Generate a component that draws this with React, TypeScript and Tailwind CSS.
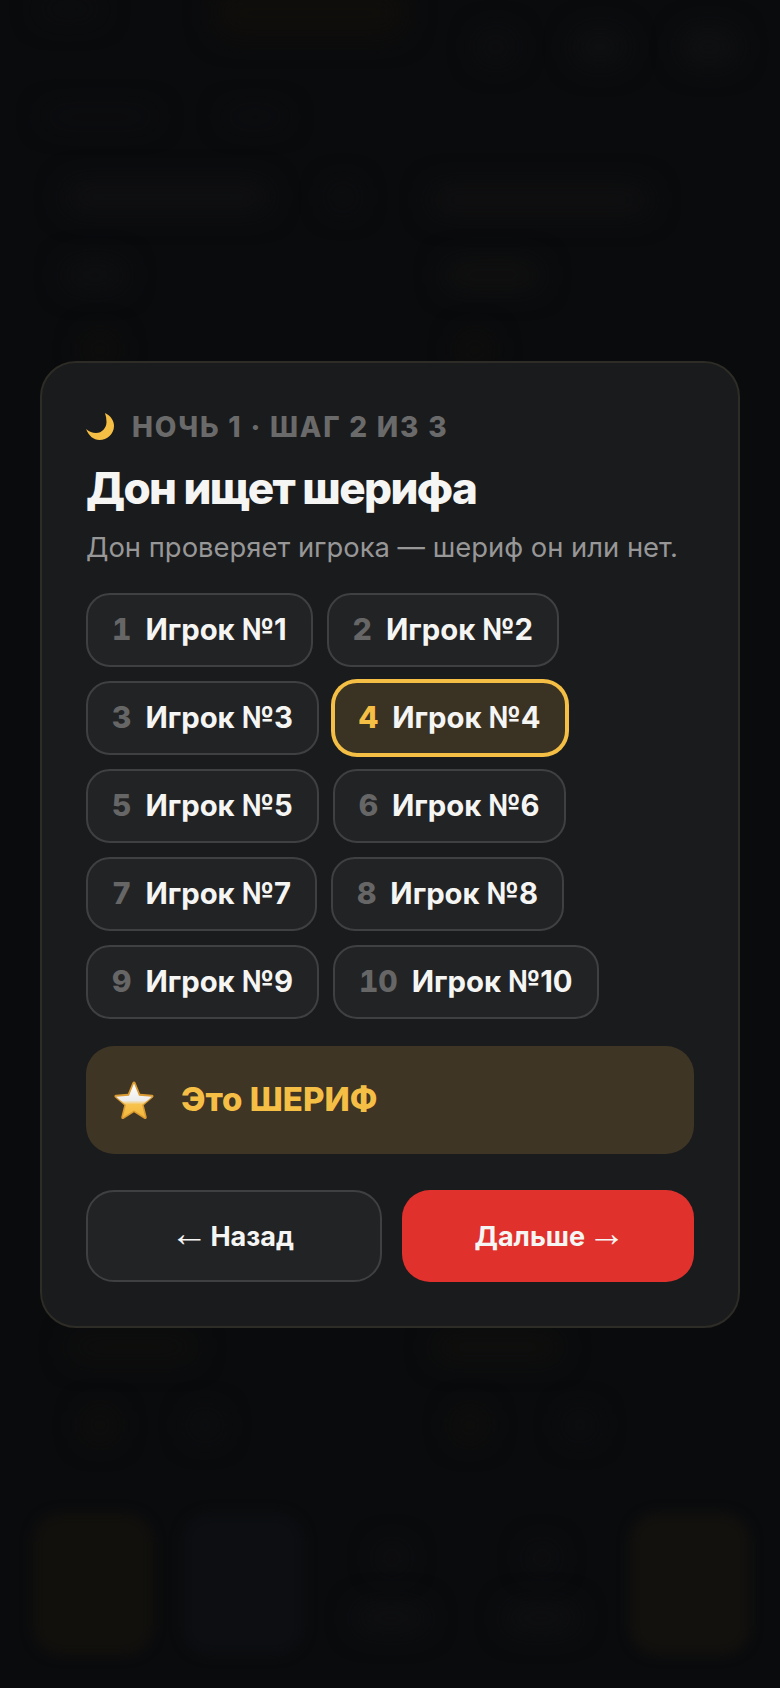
const players = [1, 2, 3, 4, 5, 6, 7, 8, 9, 10];

// what is left of the page behind the dialog: faint blurred shapes
const blobs = [
  "left-[215px] top-[-10px] h-[46px] w-[190px] rounded-2xl bg-[#100e0b]",
  "left-[40px] top-[0px] h-[18px] w-[60px] rounded-lg bg-[#0d0e10]",
  "left-[478px] top-[32px] h-[30px] w-[36px] rounded-xl bg-[#0e0f11]",
  "left-[575px] top-[30px] h-[34px] w-[50px] rounded-xl bg-[#0f1012]",
  "left-[682px] top-[30px] h-[34px] w-[54px] rounded-xl bg-[#101113]",
  "left-[45px] top-[112px] h-[10px] w-[110px] rounded-full bg-[#0e0f11]",
  "left-[225px] top-[112px] h-[10px] w-[60px] rounded-full bg-[#0e0f11]",
  "left-[65px] top-[182px] h-[30px] w-[205px] rounded-xl bg-[#101012]",
  "left-[330px] top-[185px] h-[24px] w-[26px] rounded-lg bg-[#0e0f11]",
  "left-[430px] top-[186px] h-[28px] w-[220px] rounded-xl bg-[#101011]",
  "left-[65px] top-[262px] h-[26px] w-[60px] rounded-lg bg-[#0f1012]",
  "left-[445px] top-[262px] h-[26px] w-[95px] rounded-lg bg-[#111110]",
  "left-[85px] top-[335px] h-[30px] w-[30px] rounded-lg bg-[#110f0c]",
  "left-[460px] top-[335px] h-[30px] w-[30px] rounded-lg bg-[#110f0c]",
  "left-[70px] top-[1335px] h-[24px] w-[125px] rounded-lg bg-[#100f0d]",
  "left-[435px] top-[1335px] h-[24px] w-[125px] rounded-lg bg-[#11100d]",
  "left-[85px] top-[1410px] h-[30px] w-[30px] rounded-lg bg-[#110f0c]",
  "left-[190px] top-[1412px] h-[26px] w-[30px] rounded-lg bg-[#0e0f11]",
  "left-[455px] top-[1410px] h-[30px] w-[30px] rounded-lg bg-[#110f0c]",
  "left-[565px] top-[1412px] h-[26px] w-[30px] rounded-lg bg-[#0e0f11]",
];

const tiles = [
  "left-[33px] top-[1513px] h-[142px] w-[120px] bg-[#12100d]",
  "left-[182px] top-[1513px] h-[142px] w-[122px] bg-[#0c0e11]",
  "left-[630px] top-[1513px] h-[142px] w-[120px] bg-[#13110e]",
];

const navBlobs = [
  "left-[378px] top-[1545px] h-[26px] w-[28px] bg-[#0f1012]",
  "left-[355px] top-[1605px] h-[26px] w-[72px] bg-[#0f1012]",
  "left-[528px] top-[1545px] h-[26px] w-[28px] bg-[#0f1012]",
  "left-[505px] top-[1605px] h-[26px] w-[72px] bg-[#0f1012]",
];

function Moon() {
  return (
    <svg width="28" height="28" viewBox="0 0 28 28" className="shrink-0">
      <path
        d="M19 0C25 3 28 8 28 13C28 21 21 27 13.5 27C7.5 27 3 23 0 16C3 18.5 6.5 20 10 20C16 20 20.5 15 20.5 9C20.5 6 20 3 19 0Z"
        fill="#f5bf45"
      />
    </svg>
  );
}

function Star() {
  return (
    <svg width="42" height="40" viewBox="0 0 42 40" className="shrink-0">
      <defs>
        <linearGradient id="starFill" x1="0" y1="0" x2="0" y2="1">
          <stop offset="0" stopColor="#ffffff" />
          <stop offset="0.5" stopColor="#ececec" />
          <stop offset="0.62" stopColor="#f7c34e" />
          <stop offset="1" stopColor="#f4b63c" />
        </linearGradient>
      </defs>
      <path
        d="M21 1.5c.7 0 1.2.4 1.5 1.1l4.6 11.2 11.9.9c1.6.1 2.1 1.8.9 2.8l-9.1 7.7 2.9 11.7c.4 1.5-1.2 2.6-2.5 1.8L21 32.3 10.8 38.7c-1.3.8-2.9-.3-2.5-1.8l2.9-11.7-9.1-7.7c-1.2-1-.7-2.7.9-2.8l11.9-.9 4.6-11.2c.3-.7.8-1.1 1.5-1.1Z"
        fill="#d99a32"
      />
      <path
        d="M21 3.5l5 12.2 12.9 1-9.8 8.3 3.1 12.4L21 30.4 9.8 37.4l3.1-12.4-9.8-8.3 12.9-1L21 3.5Z"
        fill="url(#starFill)"
      />
    </svg>
  );
}

function Arrow({ children }: { children: string }) {
  return (
    <span className="-mx-[4px] font-['Liberation_Sans',sans-serif] text-[38px] leading-[0] font-normal">
      {children}
    </span>
  );
}

export default function App() {
  return (
    <div className="relative flex min-h-[1688px] items-center justify-center overflow-hidden bg-[#0a0b0d] px-10 font-['Inter',sans-serif]">
      {/* blurred page behind the dialog */}
      <div className="absolute inset-0">
        {blobs.map((b) => (
          <div key={b} className={"absolute blur-[14px] " + b} />
        ))}
        {tiles.map((t) => (
          <div key={t} className={"absolute rounded-[28px] blur-[6px] " + t} />
        ))}
        {navBlobs.map((n) => (
          <div key={n} className={"absolute rounded-xl blur-[14px] " + n} />
        ))}
      </div>

      <div className="relative w-[700px] rounded-[36px] border-2 border-[#2e2c26] bg-[#1a1b1d] p-[44px]">
        {/* Step label */}
        <div className="flex h-[40px] items-center gap-[18px]">
          <Moon />
          <span className="text-[28px] leading-[40px] font-extrabold tracking-[1.8px] text-[#6a6a6a]">
            НОЧЬ 1 · ШАГ 2 ИЗ 3
          </span>
        </div>

        <h1 className="mt-[17px] text-[44px] leading-[48px] font-extrabold tracking-[-1.6px] text-[#f5f5f3]">
          Дон ищет шерифа
        </h1>
        <p className="mt-[17px] text-[27.4px] leading-[36px] text-[#979797]">
          Дон проверяет игрока — шериф он или нет.
        </p>

        {/* Players */}
        <div className="mt-[28px] flex flex-wrap gap-x-[14px] gap-y-[14px]">
          {players.map((n) =>
            n === 4 ? (
              <button
                key={n}
                className="flex h-[74px] items-center gap-[14px] rounded-[24px] border-2 border-[#f5bf45] bg-[#3a3223] px-[24px] ring-2 ring-[#f5bf45]"
              >
                <span className="min-w-[19px] text-center text-[30px] font-extrabold text-[#f5bf45] tabular-nums">{n}</span>
                <span className="text-[29.3px] font-bold text-[#f5f5f3]">Игрок №{n}</span>
              </button>
            ) : (
              <button
                key={n}
                className="flex h-[74px] items-center gap-[14px] rounded-[24px] border-2 border-[#3f4042] bg-[#222325] px-[24px]"
              >
                <span className="min-w-[19px] text-center text-[30px] font-extrabold text-[#666666] tabular-nums">{n}</span>
                <span className="text-[29.3px] font-bold text-[#f5f5f3]">Игрок №{n}</span>
              </button>
            ),
          )}
        </div>

        {/* Result */}
        <div className="mt-[27px] flex h-[108px] items-center gap-[26px] rounded-[28px] bg-[#3e3525] pl-[27px]">
          <Star />
          <span className="text-[33px] font-extrabold text-[#f5bf45]">Это ШЕРИФ</span>
        </div>

        {/* Actions */}
        <div className="mt-[36px] flex gap-5">
          <button className="h-[92px] flex-1 rounded-[28px] border-2 border-[#3f4042] bg-[#222325] pt-[3px] text-[27px] font-bold text-[#f5f5f3]">
            <Arrow>←</Arrow> Назад
          </button>
          <button className="h-[92px] flex-1 rounded-[28px] bg-[#e0312d] pt-[3px] text-[27px] font-bold text-[#f5f5f3]">
            Дальше <Arrow>→</Arrow>
          </button>
        </div>
      </div>
    </div>
  );
}
